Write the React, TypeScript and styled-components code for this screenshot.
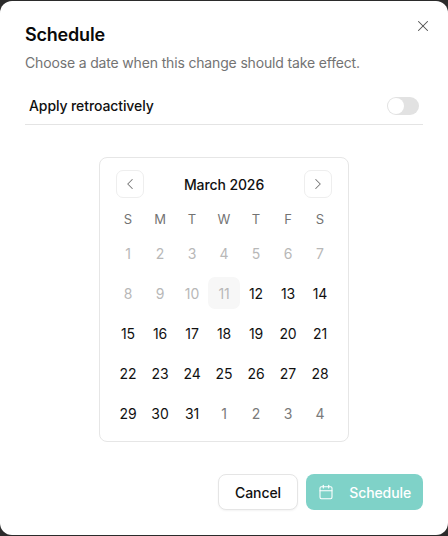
import * as React from "react";
import styled, { createGlobalStyle } from "styled-components";
import { Calendar, ChevronLeft, ChevronRight, X } from "lucide-react";

const GlobalStyle = createGlobalStyle`
  html, body {
    margin: 0;
    padding: 0;
    background: #2b2b2b;
  }
  * {
    box-sizing: border-box;
  }
`;

type DayTone = "muted" | "normal" | "faded";

const weekdays = ["S", "M", "T", "W", "T", "F", "S"];

const weeks: { label: number; tone: DayTone; today?: boolean }[][] = [
  [1, 2, 3, 4, 5, 6, 7].map((label) => ({ label, tone: "muted" as DayTone })),
  [
    { label: 8, tone: "muted" },
    { label: 9, tone: "muted" },
    { label: 10, tone: "muted" },
    { label: 11, tone: "muted", today: true },
    { label: 12, tone: "normal" },
    { label: 13, tone: "normal" },
    { label: 14, tone: "normal" },
  ],
  [15, 16, 17, 18, 19, 20, 21].map((label) => ({ label, tone: "normal" as DayTone })),
  [22, 23, 24, 25, 26, 27, 28].map((label) => ({ label, tone: "normal" as DayTone })),
  [
    { label: 29, tone: "normal" },
    { label: 30, tone: "normal" },
    { label: 31, tone: "normal" },
    { label: 1, tone: "faded" },
    { label: 2, tone: "faded" },
    { label: 3, tone: "faded" },
    { label: 4, tone: "faded" },
  ],
];

const toneColors: Record<DayTone, string> = {
  muted: "#b8b8b8",
  normal: "#111111",
  faded: "#7a7a7a",
};

const App = () => {
  return (
    <>
      <GlobalStyle />
      <Dialog>
        <CloseButton aria-label="Close">
          <X size={18} strokeWidth={1.4} />
        </CloseButton>
        <Title>Schedule</Title>
        <Description>Choose a date when this change should take effect.</Description>
        <ToggleRow>
          <ToggleLabel>Apply retroactively</ToggleLabel>
          <Toggle>
            <ToggleKnob />
          </Toggle>
        </ToggleRow>
        <CalendarWrap>
          <CalendarCard>
            <MonthHeader>
              <NavButton aria-label="Previous month">
                <ChevronLeft size={18} strokeWidth={1.4} />
              </NavButton>
              <MonthName>March 2026</MonthName>
              <NavButton aria-label="Next month">
                <ChevronRight size={18} strokeWidth={1.4} />
              </NavButton>
            </MonthHeader>
            <DayGrid>
              {weekdays.map((day, index) => (
                <Weekday key={index}>{day}</Weekday>
              ))}
              {weeks.flat().map((day, index) => (
                <DayCell key={index} $tone={day.tone} $today={day.today}>
                  {day.label}
                </DayCell>
              ))}
            </DayGrid>
          </CalendarCard>
        </CalendarWrap>
        <Footer>
          <CancelButton>Cancel</CancelButton>
          <ScheduleButton>
            <Calendar size={16} strokeWidth={1.6} />
            <span>Schedule</span>
          </ScheduleButton>
        </Footer>
      </Dialog>
    </>
  );
};

const Dialog = styled.div`
  position: relative;
  width: 448px;
  height: 534px;
  margin-top: 1px;
  padding: 24px 25px 25px 25px;
  background: #ffffff;
  border-radius: 12px;
  font-family: Inter, "Liberation Sans", sans-serif;
  display: flex;
  flex-direction: column;
`;

const CloseButton = styled.button`
  position: absolute;
  top: 16px;
  right: 16px;
  width: 18px;
  height: 18px;
  padding: 0;
  border: none;
  background: none;
  color: #505050;
  display: flex;
  align-items: center;
  justify-content: center;
`;

const Title = styled.h2`
  margin: 0;
  font-size: 18px;
  line-height: 20px;
  font-weight: 600;
  letter-spacing: -0.2px;
  color: #0a0a0a;
`;

const Description = styled.p`
  margin: 8px 0 0;
  font-size: 14px;
  line-height: 20px;
  letter-spacing: -0.16px;
  color: #737373;
`;

const ToggleRow = styled.div`
  margin-top: 16px;
  height: 36px;
  padding: 0 4px 2px;
  display: flex;
  align-items: center;
  justify-content: space-between;
  border-bottom: 1px solid #e4e4e4;
`;

const ToggleLabel = styled.span`
  font-size: 14px;
  font-weight: 500;
  letter-spacing: -0.1px;
  color: #111111;
`;

const Toggle = styled.div`
  width: 32px;
  height: 18px;
  border-radius: 9px;
  background: #e2e2e2;
  padding: 1px;
`;

const ToggleKnob = styled.div`
  width: 16px;
  height: 16px;
  border-radius: 50%;
  background: #ffffff;
`;

const CalendarWrap = styled.div`
  margin-top: 32px;
  display: flex;
  justify-content: center;
`;

const CalendarCard = styled.div`
  width: 250px;
  height: 285px;
  padding: 12px;
  border: 1px solid #e6e6e6;
  border-radius: 8px;
  background: #ffffff;
`;

const MonthHeader = styled.div`
  display: flex;
  align-items: center;
  justify-content: space-between;
  height: 28px;
  padding: 0 4px;
`;

const MonthName = styled.span`
  font-size: 14px;
  font-weight: 500;
  letter-spacing: -0.1px;
  color: #111111;
`;

const NavButton = styled.button`
  width: 28px;
  height: 28px;
  padding: 0;
  border: 1px solid #eeeeee;
  border-radius: 7px;
  background: #ffffff;
  color: #767676;
  display: flex;
  align-items: center;
  justify-content: center;
`;

const DayGrid = styled.div`
  display: grid;
  grid-template-columns: repeat(7, 32px);
  grid-template-rows: 28px repeat(5, 40px);
  margin-top: 7px;
`;

const Weekday = styled.div`
  display: flex;
  align-items: center;
  justify-content: center;
  font-size: 13px;
  color: #737373;
`;

const DayCell = styled.div<{ $tone: DayTone; $today?: boolean }>`
  align-self: center;
  height: 32px;
  display: flex;
  align-items: center;
  justify-content: center;
  font-size: 14px;
  letter-spacing: -0.1px;
  border-radius: 7px;
  color: ${({ $tone }) => toneColors[$tone]};
  background: ${({ $today }) => ($today ? "#f7f7f7" : "transparent")};
`;

const Footer = styled.div`
  margin-top: auto;
  display: flex;
  justify-content: flex-end;
  gap: 8px;
`;

const CancelButton = styled.button`
  width: 80px;
  height: 36px;
  border: 1px solid #e5e5e5;
  border-radius: 8px;
  background: #ffffff;
  font-family: inherit;
  font-size: 14px;
  font-weight: 500;
  letter-spacing: -0.1px;
  color: #111111;
  box-shadow: 0 1px 2px rgba(0, 0, 0, 0.05);
`;

const ScheduleButton = styled.button`
  width: 117px;
  height: 36px;
  padding: 0 12px;
  border: none;
  border-radius: 8px;
  background: #7fd2c8;
  font-family: inherit;
  font-size: 14px;
  font-weight: 500;
  letter-spacing: -0.1px;
  color: #ffffff;
  display: flex;
  align-items: center;
  justify-content: space-between;
`;

export default App;
